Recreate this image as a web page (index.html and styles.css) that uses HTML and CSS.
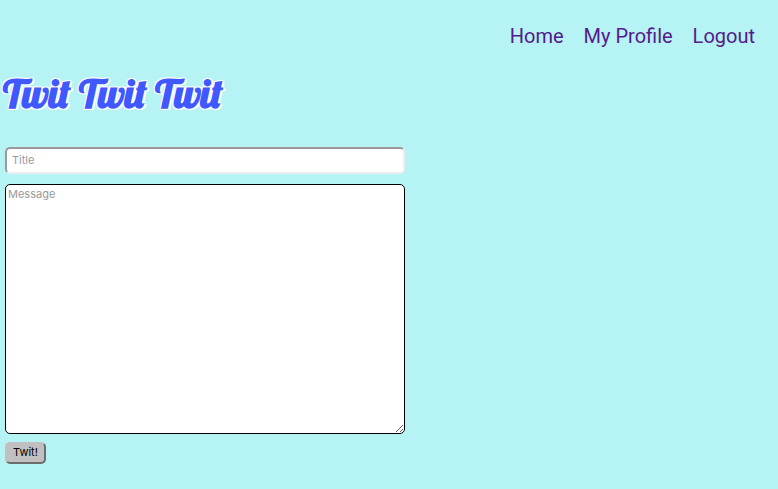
FILE: index.html
```html
<!DOCTYPE html>
<html lang="en">
<head>
<meta charset="utf-8">
<title>Twit Twit Twit</title>
<link rel="stylesheet" href="styles.css">
</head>
<body>
<nav class="nav">
<a href="#">Home</a>
<a href="#">My Profile</a>
<a href="#">Logout</a>
</nav>
<h1 class="logo">Twit Twit Twit</h1>
<form class="form">
<input class="title" type="text" placeholder="Title" aria-label="Title">
<textarea class="message" placeholder="Message" aria-label="Message"></textarea>
<button class="submit" type="button">Twit!</button>
</form>
</body>
</html>
```
FILE: styles.css
```css
* { box-sizing: border-box; }
body {
  margin: 0;
  background: #b5f3f4;
  font-family: Roboto, sans-serif;
}
.nav {
  display: flex;
  justify-content: flex-end;
  gap: 20px;
  padding: 24px 23px 0;
  font-size: 20px;
  line-height: 24px;
}
.nav a {
  color: #551a8b;
  text-decoration: none;
}
.logo {
  margin: 20px 0 0 3px;
  font-family: Lobster, "Liberation Serif", serif;
  font-size: 40px;
  line-height: 50px;
  font-weight: 700;
  color: #4059ff;
  text-shadow: -1px -1px 0 #fff, 1px -1px 0 #fff, -1px 1px 0 #fff, 1px 1px 0 #fff, 2px 1px 0 #fff;
}
.form {
  display: flex;
  flex-direction: column;
  align-items: flex-start;
  max-width: 400px;
  margin: 29px 5px 0;
}
.title, .message, .submit {
  font-family: Inter, sans-serif;
  font-size: 11px;
  border-radius: 5px;
}
.title {
  width: 100%;
  height: 27px;
  padding: 0 5px 1px;
  border: 2px inset #eee;
  background: #fff;
}
.message {
  width: 100%;
  height: 250px;
  margin: 10px 0 8px;
  padding: 2px;
  border: 1px solid #000;
}
.title::placeholder, .message::placeholder { color: #999; }
.submit {
  height: 22px;
  padding: 0 6px 2px;
  border: 2px outset #c0c0c0;
  background: #c0c0c0;
  color: #000;
}
```
